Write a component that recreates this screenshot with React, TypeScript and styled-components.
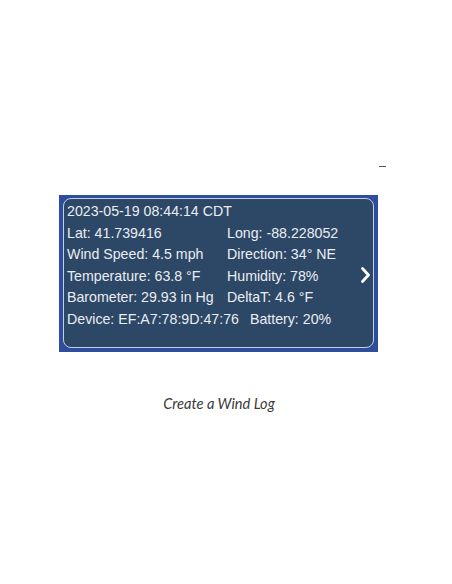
import styled, { createGlobalStyle } from "styled-components";

const GlobalStyle = createGlobalStyle`
  html, body {
    margin: 0;
    padding: 0;
    background: #ffffff;
  }
`;

const Page = styled.div`
  width: 452px;
  height: 584px;
  display: flex;
  flex-direction: column;
  font-family: "Liberation Sans", Arial, sans-serif;
`;

const TopBar = styled.div`
  height: 167px;
  display: flex;
  justify-content: flex-end;
  align-items: flex-end;
  padding-right: 66px;
`;

const Dash = styled.div`
  width: 7px;
  height: 1px;
  background: #6b4a55;
`;

const Frame = styled.div`
  margin: 28px 0 0 59px;
  width: 319px;
  height: 157px;
  box-sizing: border-box;
  padding: 3px 4px 4px 4px;
  background: #2e4d9c;
`;

const Card = styled.div`
  height: 100%;
  box-sizing: border-box;
  border: 1px solid #c3cfe2;
  border-radius: 8px;
  background: #2d4766;
  padding: 2px 0 0 3px;
  display: flex;
  position: relative;
`;

const Rows = styled.div`
  flex: 1;
  display: flex;
  flex-direction: column;
`;

const Line = styled.div`
  color: #eaedf2;
  font-size: 14.2px;
  line-height: 21.6px;
  white-space: nowrap;
`;

const Pair = styled.div<{ $gap?: number }>`
  display: flex;
  color: #eaedf2;
  font-size: 14.2px;
  line-height: 21.6px;
  white-space: nowrap;
  & > span:first-child {
    width: ${(p) => (p.$gap === undefined ? "160px" : "auto")};
    margin-right: ${(p) => (p.$gap === undefined ? "0" : `${p.$gap}px`)};
  }
`;

const Chevron = styled.svg`
  position: absolute;
  right: 2px;
  top: 67px;
`;

const Caption = styled.div`
  margin-top: 43px;
  text-align: center;
  padding-right: 14px;
  font-family: Lato, "Open Sans", sans-serif;
  font-style: italic;
  font-size: 14.6px;
  color: #3a3a3a;
`;

const rows = [
  ["Lat: 41.739416", "Long: -88.228052"],
  ["Wind Speed: 4.5 mph", "Direction: 34° NE"],
  ["Temperature: 63.8 °F", "Humidity: 78%"],
  ["Barometer: 29.93 in Hg", "DeltaT: 4.6 °F"],
];

function App() {
  return (
    <Page>
      <GlobalStyle />
      <TopBar>
        <Dash />
      </TopBar>
      <Frame>
        <Card>
          <Rows>
            <Line>2023-05-19 08:44:14 CDT</Line>
            {rows.map(([a, b]) => (
              <Pair key={a}>
                <span>{a}</span>
                <span>{b}</span>
              </Pair>
            ))}
            <Pair $gap={11}>
              <span>Device: EF:A7:78:9D:47:76</span>
              <span>Battery: 20%</span>
            </Pair>
          </Rows>
          <Chevron width="11" height="18" viewBox="0 0 11 18">
            <path
              d="M2.5 2.5 L8.5 9 L2.5 15.5"
              fill="none"
              stroke="#ffffff"
              strokeWidth="2.8"
              strokeLinecap="round"
              strokeLinejoin="round"
            />
          </Chevron>
        </Card>
      </Frame>
      <Caption>Create a Wind Log</Caption>
    </Page>
  );
}

export default App;
